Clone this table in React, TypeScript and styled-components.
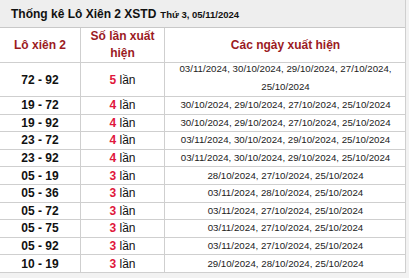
import React from "react";
import styled, { createGlobalStyle } from "styled-components";

const Global = createGlobalStyle`
  html, body { margin: 0; padding: 0; background: #f2f2f2; }
  body { font-family: "Liberation Sans", Arial, sans-serif; }
`;

const Wrap = styled.div`
  width: 405px;
  background: #fff;
  border-right: 1px solid #cfcfcf;
`;

const TitleBar = styled.div`
  background: #eeeeee;
  border-bottom: 1px solid #c8c8c8;
  display: flex;
  align-items: center;
  padding-left: 11px;
  box-sizing: border-box;
  height: 28px;
  font-weight: bold;
  color: #111;
`;

const TitleMain = styled.span`
  font-size: 12px;
`;

const TitleDate = styled.span`
  font-size: 9.5px;
  margin-left: 4px;
  margin-top: 1px;
`;

const Table = styled.table`
  width: 404px;
  border-collapse: collapse;
  table-layout: fixed;
`;

const HeadCell = styled.th<{ $w: number }>`
  width: ${(p) => p.$w}px;
  height: 34px;
  padding: 0;
  color: #9b1b1f;
  font-size: 12px;
  font-weight: bold;
  line-height: 17px;
  text-align: center;
  border-bottom: 1px solid #cfcfcf;
  border-right: 1px solid #cfcfcf;
  &:last-child { border-right: none; }
`;

const Row = styled.tr<{ $tall?: boolean }>`
  height: ${(p) => (p.$tall ? 34 : 17.6)}px;
`;

const Cell = styled.td`
  padding: 0;
  text-align: center;
  line-height: 14px;
  border-bottom: 1px solid #cfcfcf;
  border-right: 1px solid #cfcfcf;
  &:last-child { border-right: none; }
`;

const Pair = styled(Cell)`
  font-weight: bold;
  font-size: 12px;
  color: #111;
`;

const Count = styled(Cell)`
  font-size: 12px;
  color: #111;
`;

const Num = styled.span`
  color: #e0173c;
  font-weight: bold;
`;

const Dates = styled(Cell)`
  font-size: 9.7px;
  color: #222;
  padding: 0 6px;
`;

const DateLines = styled.div<{ $tall?: boolean }>`
  line-height: ${(p) => (p.$tall ? 18 : 14)}px;
  margin-top: ${(p) => (p.$tall ? -3 : 0)}px;
`;

const rows: [string, number, string][] = [
  ["72 - 92", 5, "03/11/2024, 30/10/2024, 29/10/2024, 27/10/2024, 25/10/2024"],
  ["19 - 72", 4, "30/10/2024, 29/10/2024, 27/10/2024, 25/10/2024"],
  ["19 - 92", 4, "30/10/2024, 29/10/2024, 27/10/2024, 25/10/2024"],
  ["23 - 72", 4, "03/11/2024, 30/10/2024, 29/10/2024, 25/10/2024"],
  ["23 - 92", 4, "03/11/2024, 30/10/2024, 29/10/2024, 25/10/2024"],
  ["05 - 19", 3, "28/10/2024, 27/10/2024, 25/10/2024"],
  ["05 - 36", 3, "03/11/2024, 28/10/2024, 25/10/2024"],
  ["05 - 72", 3, "03/11/2024, 27/10/2024, 25/10/2024"],
  ["05 - 75", 3, "03/11/2024, 27/10/2024, 25/10/2024"],
  ["05 - 92", 3, "03/11/2024, 27/10/2024, 25/10/2024"],
  ["10 - 19", 3, "29/10/2024, 28/10/2024, 25/10/2024"],
];

export default function App() {
  return (
    <>
      <Global />
      <Wrap>
        <TitleBar>
          <TitleMain>Thống kê Lô Xiên 2 XSTD</TitleMain>
          <TitleDate>Thứ 3, 05/11/2024</TitleDate>
        </TitleBar>
        <Table>
          <thead>
            <tr>
              <HeadCell $w={80}>Lô xiên 2</HeadCell>
              <HeadCell $w={83}>
                Số lần xuất
                <br />
                hiện
              </HeadCell>
              <HeadCell $w={241}>Các ngày xuất hiện</HeadCell>
            </tr>
          </thead>
          <tbody>
            {rows.map(([pair, n, dates], i) => (
              <Row key={pair} $tall={i === 0}>
                <Pair>{pair}</Pair>
                <Count>
                  <Num>{n}</Num> lần
                </Count>
                <Dates>
                  <DateLines $tall={i === 0}>{dates}</DateLines>
                </Dates>
              </Row>
            ))}
          </tbody>
        </Table>
      </Wrap>
    </>
  );
}
